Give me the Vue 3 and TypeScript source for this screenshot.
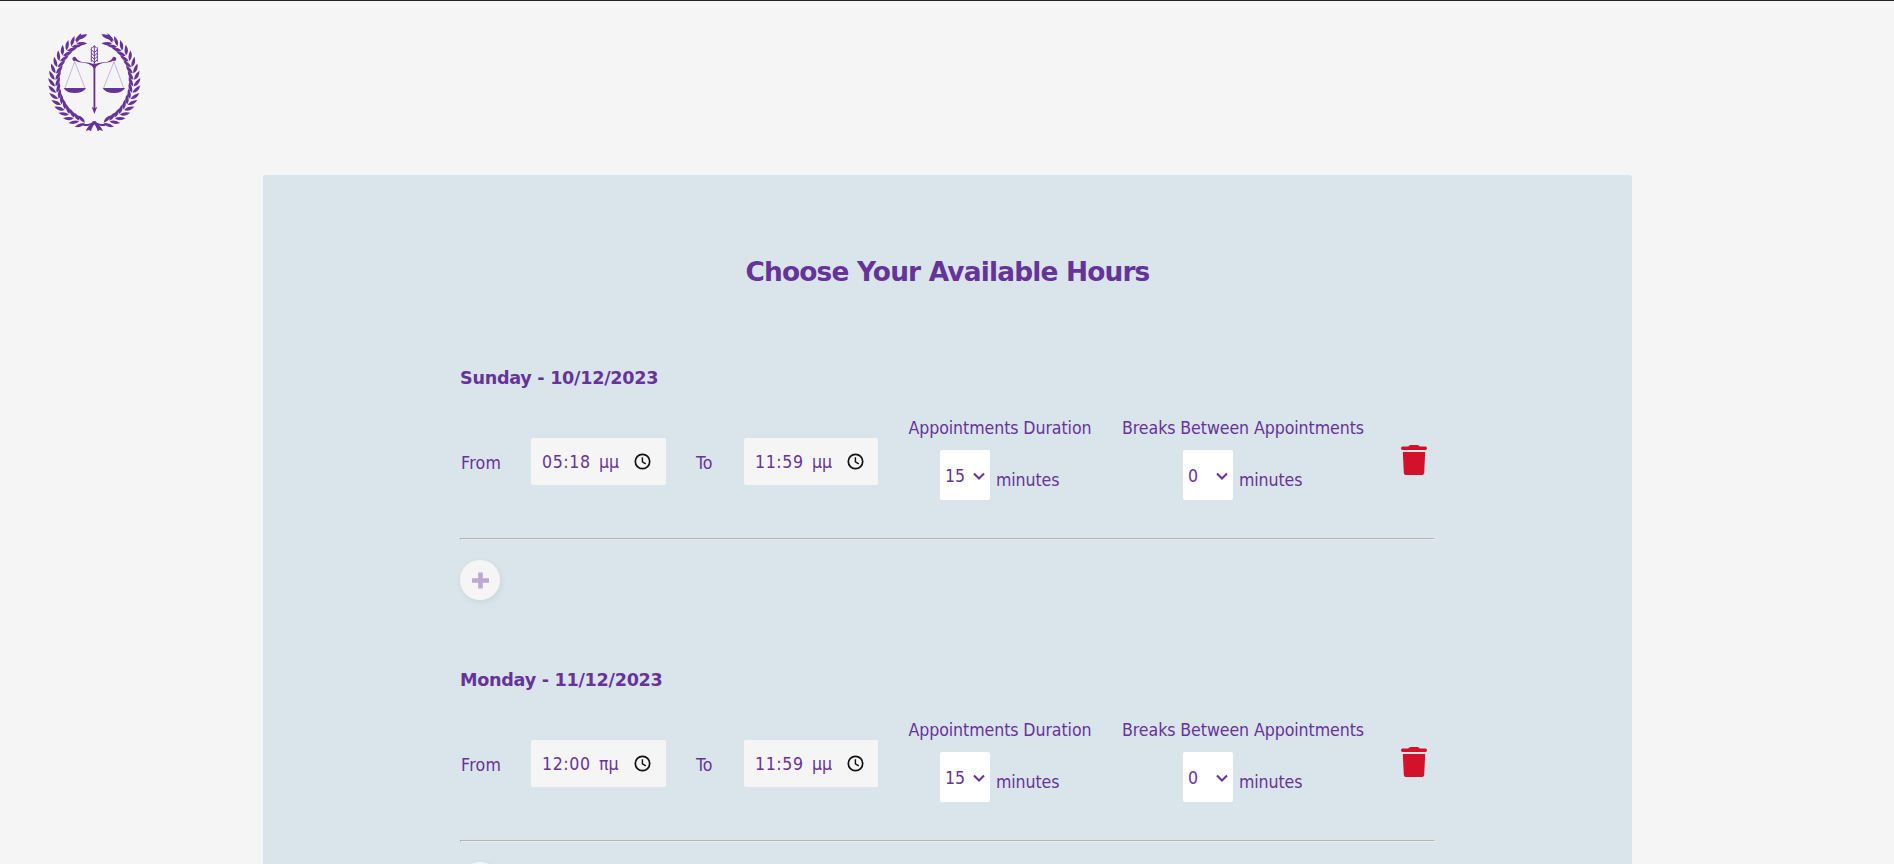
<script setup lang="ts">
interface Slot {
  from: string
  fromPeriod: string
  to: string
  toPeriod: string
  duration: string
  pause: string
}

interface Day {
  label: string
  slot: Slot
}

const days: Day[] = [
  {
    label: 'Sunday - 10/12/2023',
    slot: { from: '05:18', fromPeriod: 'μμ', to: '11:59', toPeriod: 'μμ', duration: '15', pause: '0' },
  },
  {
    label: 'Monday - 11/12/2023',
    slot: { from: '12:00', fromPeriod: 'πμ', to: '11:59', toPeriod: 'μμ', duration: '15', pause: '0' },
  },
]

// Laurel leaves follow an elliptical stem, one pair per step.
const leaves: string[] = []
const PAIRS = 17
for (let i = 0; i < PAIRS; i++) {
  const deg = 102 + (i * 139) / (PAIRS - 1)
  const t = (deg * Math.PI) / 180
  const x = 193 + 118 * Math.cos(t)
  const y = 184 + 129 * Math.sin(t)
  const heading = (Math.atan2(129 * Math.cos(t), -118 * Math.sin(t)) * 180) / Math.PI
  leaves.push(`translate(${x.toFixed(1)} ${y.toFixed(1)}) rotate(${(heading - 26).toFixed(1)})`)
  leaves.push(`translate(${x.toFixed(1)} ${y.toFixed(1)}) rotate(${(heading + 26).toFixed(1)}) scale(1 -1)`)
}
</script>

<template>
  <div class="page">
    <header class="top">
      <svg class="logo" viewBox="0 0 390 360" fill="#663399">
        <g v-for="m in [0, 1]" :key="m" :transform="m ? 'translate(386 0) scale(-1 1)' : undefined">
          <path v-for="(l, i) in leaves" :key="i" :transform="l" d="M4 1Q16 -12 36 -2Q18 8 4 1Z" />
          <path d="M134 62Q145 40 172 43Q163 59 134 62Z" />
          <path d="M200 305Q186 318 183 334L177 330L167 333Q175 315 192 306Z" />
          <path d="M160 318Q180 320 199 305L193 303Q181 314 160 312Z" />
          <path d="M193 137Q170 128 145 126L136 122A6 6 0 1 1 139 115Q145 124 160 127Q184 128 193 134Z" />
          <path d="M134 125L105 204M134 125L165 204" fill="none" stroke="#663399" stroke-width="1.5" opacity=".65" />
          <path d="M101 204H168Q160 219 134 219Q109 219 101 204Z" />
        </g>
        <path d="M190.5 130H196V264L202 260L193 282L185 260L190.5 264Z" />
        <path d="M172 129Q193 137 214 129Q201 135 193 148Q185 135 172 129Z" />
        <path
          d="M193 77V130M184 82V125M202 82V125M184 89L193 98L202 89M184 99L193 108L202 99M184 109L193 118L202 109M184 119L193 128L202 119M187 84L193 77L199 84"
          fill="none" stroke="#663399" stroke-width="2.8"
        />
      </svg>
    </header>

    <main class="card">
      <h1 class="title">Choose Your Available Hours</h1>
      <section v-for="d in days" :key="d.label" class="day">
        <h2 class="date">{{ d.label }}</h2>
        <div class="row">
          <label class="word from">From</label>
          <div class="time first">
            <span class="clock-text">{{ d.slot.from }}</span>
            <span class="period">{{ d.slot.fromPeriod }}</span>
            <svg class="clock" viewBox="0 0 17 17" fill="none" stroke="#101010">
              <circle cx="8.5" cy="8.5" r="7.2" stroke-width="1.7" />
              <path d="M8.4 4.2V8.8L11.8 10.9" stroke-width="1.4" />
            </svg>
          </div>
          <label class="word to">To</label>
          <div class="time second">
            <span class="clock-text">{{ d.slot.to }}</span>
            <span class="period">{{ d.slot.toPeriod }}</span>
            <svg class="clock" viewBox="0 0 17 17" fill="none" stroke="#101010">
              <circle cx="8.5" cy="8.5" r="7.2" stroke-width="1.7" />
              <path d="M8.4 4.2V8.8L11.8 10.9" stroke-width="1.4" />
            </svg>
          </div>
          <div class="choice duration">
            <span class="caption">Appointments Duration</span>
            <div class="pick">
              <div class="select">
                <span>{{ d.slot.duration }}</span>
                <svg class="chevron" viewBox="0 0 12 8"><path d="M1 1.4L6 6.4L11 1.4" /></svg>
              </div>
              <span class="minutes">minutes</span>
            </div>
          </div>
          <div class="choice pause">
            <span class="caption">Breaks Between Appointments</span>
            <div class="pick">
              <div class="select">
                <span>{{ d.slot.pause }}</span>
                <svg class="chevron" viewBox="0 0 12 8"><path d="M1 1.4L6 6.4L11 1.4" /></svg>
              </div>
              <span class="minutes">minutes</span>
            </div>
          </div>
          <svg class="trash" viewBox="0 0 26 30" fill="#d4112b">
            <path d="M1.5 1.6H7.3Q8 0 9.5 0H16.5Q18 0 18.7 1.6H24.5Q26 1.6 26 3.3T24.5 5H1.5Q0 5 0 3.3T1.5 1.6Z" />
            <path d="M1.8 7H24.2L23.2 27.4Q23 30 20.4 30H5.6Q3 30 2.8 27.4Z" />
          </svg>
        </div>
        <hr class="rule" />
        <button class="add" type="button" aria-label="Add hours">
          <svg viewBox="0 0 17 17"><path d="M6.2 .5H10.8V6.3H17V10.7H10.8V16.5H6.2V10.7H0V6.3H6.2Z" /></svg>
        </button>
      </section>
    </main>
  </div>
</template>

<style>
body {
  margin: 0;
  background: #f5f5f5;
  overflow: hidden;
}
</style>

<style scoped>
.page {
  box-sizing: border-box;
  height: 100vh;
  overflow: hidden;
  border-top: 1px solid #222;
  background: #f5f5f5;
  color: #663399;
  font-family: Tahoma, "DejaVu Sans Condensed", "DejaVu Sans", sans-serif;
  font-stretch: condensed;
  font-size: 17.6px;
  line-height: 22px;
  white-space: nowrap;
}
.top {
  height: 155px;
  padding: 19px 0 0 30px;
}
.logo {
  display: block;
  width: 130px;
  height: 120px;
}
.card {
  box-sizing: border-box;
  width: 1369px;
  height: 1100px;
  margin-left: 263px;
  padding: 80px 197px 0;
  border-radius: 3px;
  background: #dae5eb;
}
.title,
.date {
  font-family: Tahoma, "DejaVu Sans", sans-serif;
  font-stretch: normal;
  font-weight: bold;
}
.title {
  margin: 0;
  height: 34px;
  font-size: 26.4px;
  line-height: 34px;
  text-align: center;
  letter-spacing: -0.82px;
}
.day {
  box-sizing: border-box;
  height: 302px;
  padding-top: 78px;
}
.date {
  margin: 0;
  height: 22px;
  font-size: 17.6px;
  line-height: 22px;
  letter-spacing: -0.28px;
}
.row {
  display: flex;
  gap: 30px;
  height: 93px;
  margin: 27px 0 0 1px;
}
.word {
  padding-top: 36px;
}
.from {
  width: 40px;
  letter-spacing: 0.3px;
}
.to {
  width: 18px;
}
.time {
  box-sizing: border-box;
  display: flex;
  align-items: center;
  width: 135px;
  height: 47px;
  margin-top: 22px;
  padding-left: 11px;
  border-radius: 2px;
  background: #f5f5f5;
}
.time.second {
  width: 134px;
}
.clock-text {
  width: 57px;
  letter-spacing: 0.6px;
}
.period {
  width: 35px;
}
.clock {
  width: 17px;
  height: 17px;
}
.choice {
  display: flex;
  flex-direction: column;
  align-items: center;
}
.duration {
  width: 184px;
}
.pause {
  width: 242px;
}
.caption {
  height: 22px;
  margin-top: 1px;
  letter-spacing: -0.08px;
}
.pick {
  display: flex;
  gap: 6px;
  margin-top: 11px;
}
.select {
  box-sizing: border-box;
  display: flex;
  align-items: center;
  justify-content: space-between;
  width: 50px;
  height: 50px;
  padding: 1px 5px 0;
  border-radius: 2px;
  background: #fff;
}
.chevron {
  width: 12px;
  height: 8px;
  fill: none;
  stroke: #663399;
  stroke-width: 2.1;
}
.minutes {
  width: 64px;
  padding-top: 19px;
  letter-spacing: -0.1px;
}
.trash {
  width: 26px;
  height: 30px;
  margin: 29px 0 0 7px;
}
.rule {
  box-sizing: border-box;
  width: 975px;
  height: 2px;
  margin: 29px 0 0;
  border: 1px solid;
  border-color: #b7b2b2 #eee #eee #a0a0a0;
}
.add {
  display: flex;
  align-items: center;
  justify-content: center;
  width: 40px;
  height: 40px;
  margin: 20px 0 0;
  padding: 0;
  border: 0;
  border-radius: 50%;
  background: #f5f5f5;
  box-shadow: 1px 2px 6px rgba(0, 0, 0, 0.07);
}
.add svg {
  width: 17px;
  height: 17px;
  margin-left: 1px;
  fill: #bea7d4;
}
</style>
